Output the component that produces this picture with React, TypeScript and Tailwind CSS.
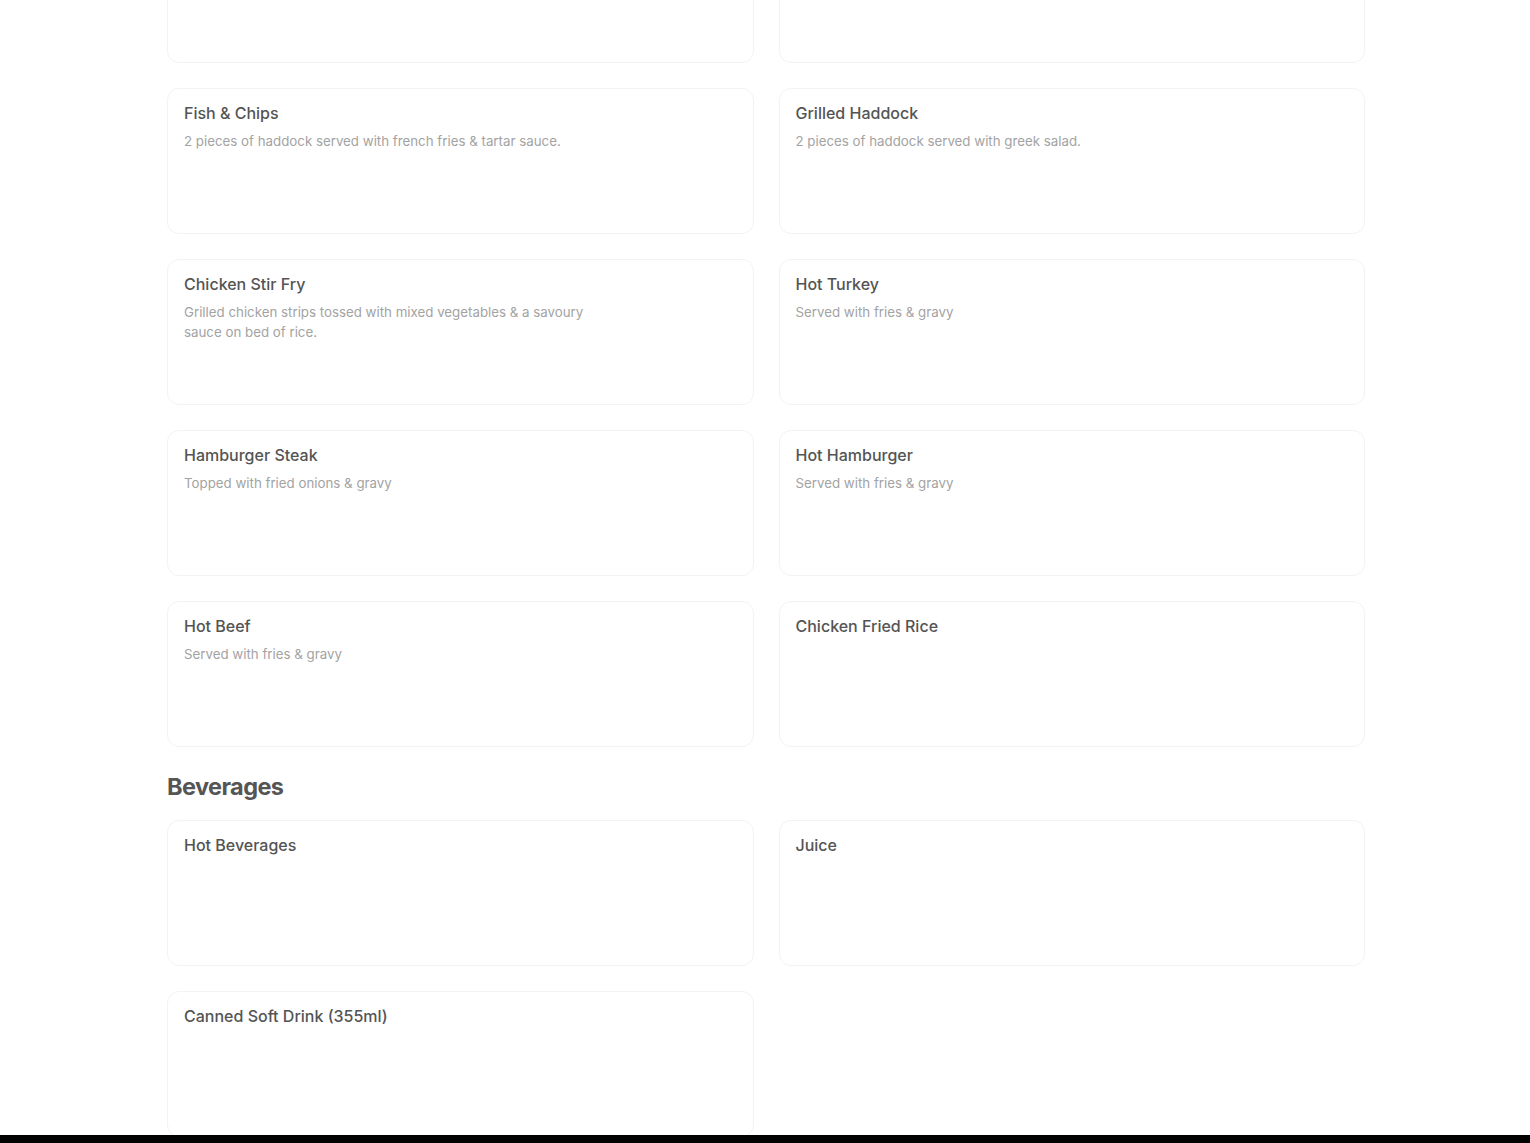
import React from 'react'

type Item = { name: string; desc?: string }

const mains: Item[] = [
  { name: 'Club Sandwich', desc: 'Triple decker with turkey, bacon, lettuce & tomato, served with fries or a side of gravy.' },
  { name: 'Chicken Caesar Wrap' },
  { name: 'Fish & Chips', desc: '2 pieces of haddock served with french fries & tartar sauce.' },
  { name: 'Grilled Haddock', desc: '2 pieces of haddock served with greek salad.' },
  { name: 'Chicken Stir Fry', desc: 'Grilled chicken strips tossed with mixed vegetables & a savoury sauce on bed of rice.' },
  { name: 'Hot Turkey', desc: 'Served with fries & gravy' },
  { name: 'Hamburger Steak', desc: 'Topped with fried onions & gravy' },
  { name: 'Hot Hamburger', desc: 'Served with fries & gravy' },
  { name: 'Hot Beef', desc: 'Served with fries & gravy' },
  { name: 'Chicken Fried Rice' },
]

const beverages: Item[] = [
  { name: 'Hot Beverages' },
  { name: 'Juice' },
  { name: 'Canned Soft Drink (355ml)' },
]

function Card({ item }: { item: Item }) {
  return (
    <div className="h-[146px] rounded-xl border border-[#f3f3f3] bg-white px-4 pt-[14px]">
      <div className="text-[16px] leading-5 font-medium text-[#545454]">{item.name}</div>
      {item.desc && (
        <p className="mt-2 max-w-[425px] text-[13.3px] leading-5 text-[#a3a3a3]">{item.desc}</p>
      )}
    </div>
  )
}

export default function App() {
  return (
    <div
      className="flex h-screen flex-col overflow-hidden bg-white"
      style={{ fontFamily: 'Inter, "Noto Sans", sans-serif' }}
    >
      <div className="flex-1 overflow-hidden">
        <div className="ml-[167px] w-[1198px] -mt-[83px]">
          <div className="grid grid-cols-2 gap-[25px]">
            {mains.map(m => (
              <Card key={m.name} item={m} />
            ))}
          </div>
          <h2 className="mt-6 mb-[17px] h-8 text-[23.5px] leading-8 font-bold tracking-tight text-[#555555]">
            Beverages
          </h2>
          <div className="grid grid-cols-2 gap-[25px]">
            {beverages.map(b => (
              <Card key={b.name} item={b} />
            ))}
          </div>
        </div>
      </div>
      <div className="h-2 bg-black" />
    </div>
  )
}
